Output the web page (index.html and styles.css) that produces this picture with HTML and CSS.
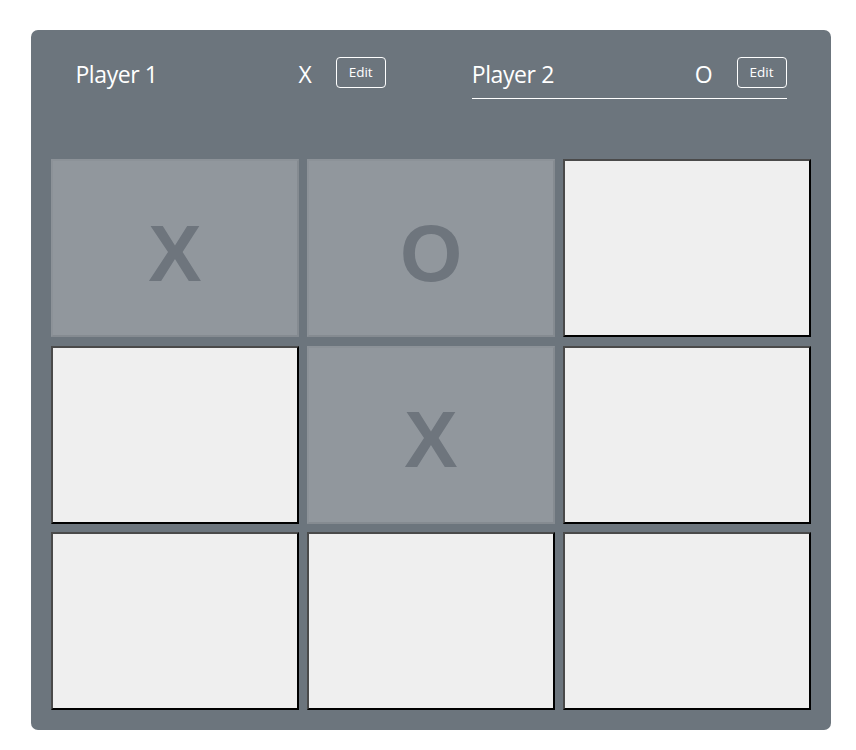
FILE: index.html
```html
<!DOCTYPE html>
<html lang="en">
<head>
<meta charset="utf-8">
<title>Tic Tac Toe</title>
<link rel="stylesheet" href="styles.css">
</head>
<body>
<div class="game">
  <ol class="players">
    <li class="player">
      <span class="player-name">Player 1</span>
      <span class="player-symbol">X</span>
      <button class="edit-btn">Edit</button>
    </li>
    <li class="player active">
      <span class="player-name">Player 2</span>
      <span class="player-symbol">O</span>
      <button class="edit-btn">Edit</button>
    </li>
  </ol>
  <ol class="board">
    <li><button class="cell filled" disabled>X</button></li>
    <li><button class="cell filled" disabled>O</button></li>
    <li><button class="cell"></button></li>
    <li><button class="cell"></button></li>
    <li><button class="cell filled" disabled>X</button></li>
    <li><button class="cell"></button></li>
    <li><button class="cell"></button></li>
    <li><button class="cell"></button></li>
    <li><button class="cell"></button></li>
  </ol>
</div>
</body>
</html>
```

FILE: styles.css
```css
html, body {
  margin: 0;
  padding: 0;
  background: #ffffff;
}

body {
  font-family: "Open Sans", "Noto Sans", sans-serif;
}

.game {
  width: 760px;
  margin: 30px 0 0 31px;
  padding: 20px;
  background: #6c757d;
  border-radius: 7px;
}

.players {
  list-style: none;
  margin: 0 0 60px;
  padding: 0;
  display: flex;
  justify-content: center;
  gap: 86px;
}

.player {
  display: flex;
  align-items: center;
  padding: 7px 0 10px;
  border-bottom: 1px solid transparent;
  color: #ffffff;
}

.player.active {
  border-bottom-color: #ffffff;
}

.player-name {
  width: 223px;
  font-size: 23px;
  line-height: 27px;
  letter-spacing: -0.4px;
  padding-top: 4px;
}

.player-symbol {
  font-size: 23px;
  line-height: 27px;
  margin-right: 24px;
  padding-top: 4px;
}

.edit-btn {
  font-family: "Open Sans", "Noto Sans", sans-serif;
  font-size: 13.5px;
  line-height: 17px;
  color: #ffffff;
  background: transparent;
  border: 1px solid #ffffff;
  border-radius: 4px;
  padding: 6px 11px;
  width: 50px;
}

.board {
  list-style: none;
  margin: 0;
  padding: 0;
  display: grid;
  grid-template-columns: repeat(3, 248px);
  grid-template-rows: repeat(3, 178px);
  gap: 8.5px 8px;
}

.board li {
  display: flex;
}

.cell {
  flex: 1;
  margin: 0;
  padding: 11px 0 0;
  background: #efefef;
  border-style: solid;
  border-width: 2px;
  border-color: #4a4a4a #000000 #000000 #4a4a4a;
  font-family: "Liberation Sans", Arial, sans-serif;
  font-weight: bold;
  font-size: 80px;
  color: #6c757d;
}

.cell.filled {
  background: #91979d;
  border-color: #8c9298 #858b91 #858b91 #8c9298;
  color: #6e757d;
}
```
